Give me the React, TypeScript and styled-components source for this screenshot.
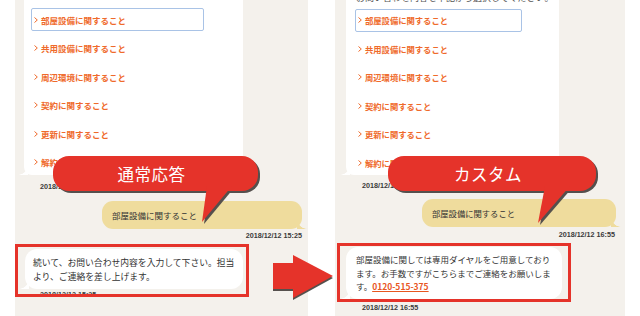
import React from "react";
import styled, { createGlobalStyle } from "styled-components";

const Global = createGlobalStyle`
  html, body { margin: 0; padding: 0; background: #fff; }
  body { width: 640px; height: 316px; overflow: hidden; font-family: "Noto Sans CJK JP", "Noto Sans", sans-serif; }
`;

const BEIGE = "#f4f1ec";
const ORANGE = "#ef6a2b";
const RED = "#e5332a";
const JP = `"Noto Sans CJK JP", "Noto Sans", sans-serif`;

const Page = styled.div`
  position: relative;
  display: flex;
  gap: 27px;
  height: 316px;
  padding-left: 15px;
  overflow: hidden;
`;

const Panel = styled.div<{ $w: number }>`
  width: ${(p) => p.$w}px;
  height: 316px;
  background: ${BEIGE};
  display: flex;
  flex-direction: column;
  overflow: hidden;
  flex-shrink: 0;
`;

const Card = styled.div<{ $ml: number; $w: number; $pt: number }>`
  position: relative;
  margin-left: ${(p) => p.$ml}px;
  width: ${(p) => p.$w}px;
  height: 175px;
  box-sizing: border-box;
  background: #fff;
  padding: ${(p) => p.$pt}px 9px 0 ${(p) => p.$ml - 2}px;
  display: flex;
  flex-direction: column;
  gap: 5.5px;
  border-radius: 0 0 8px 8px;
  &::after {
    content: "";
    position: absolute;
    left: -6px;
    bottom: 0;
    width: 10px;
    height: 10px;
    background: radial-gradient(circle at 0 0, transparent 9.5px, #fff 10px);
  }
`;

const TopLine = styled.div`
  margin-top: -7.5px;
  height: 10.5px;
  font-family: ${JP};
  font-size: 9px;
  line-height: 10px;
  color: #555;
  white-space: nowrap;
  overflow: hidden;
  padding-left: 1px;
`;

const Row = styled.div<{ $w: number; $focus?: boolean; $fs: number }>`
  flex-shrink: 0;
  width: ${(p) => p.$w}px;
  height: 23px;
  box-sizing: border-box;
  display: flex;
  align-items: center;
  gap: 3px;
  padding-left: 2px;
  border: 1px solid ${(p) => (p.$focus ? "#a9c3e6" : "transparent")};
  border-radius: 2px;
  font-family: ${JP};
  font-size: ${(p) => p.$fs}px;
  font-weight: 700;
  color: ${ORANGE};
  white-space: nowrap;
`;

const Chevron = styled.svg`
  width: 4px;
  height: 6px;
  flex-shrink: 0;
`;

const Stamp = styled.div<{ $mt: number; $ml?: number; $mr?: number; $right?: boolean }>`
  margin-top: ${(p) => p.$mt}px;
  margin-left: ${(p) => p.$ml ?? 0}px;
  margin-right: ${(p) => p.$mr ?? 0}px;
  align-self: ${(p) => (p.$right ? "flex-end" : "flex-start")};
  height: 8px;
  font-family: "Liberation Sans", Arial, sans-serif;
  font-size: 7.2px;
  line-height: 8px;
  font-weight: 700;
  color: #3a3a3a;
  white-space: nowrap;
`;

const UserBubble = styled.div<{ $mt: number; $mr: number; $w: number; $fs: number }>`
  position: relative;
  align-self: flex-end;
  margin-top: ${(p) => p.$mt}px;
  margin-right: ${(p) => p.$mr}px;
  width: ${(p) => p.$w}px;
  height: 28px;
  box-sizing: border-box;
  padding-left: 10px;
  display: flex;
  align-items: center;
  background: #efdc9d;
  border-radius: 11px;
  font-family: ${JP};
  font-size: ${(p) => p.$fs}px;
  color: #333;
  &::after {
    content: "";
    position: absolute;
    right: -5px;
    bottom: 0;
    width: 10px;
    height: 10px;
    background: radial-gradient(circle at 100% 0, transparent 9.5px, #efdc9d 10px);
  }
`;

const BotBlock = styled.div<{ $mt: number; $pl: number; $pt: number }>`
  position: relative;
  margin-top: ${(p) => p.$mt}px;
  padding-left: ${(p) => p.$pl}px;
  padding-top: ${(p) => p.$pt}px;
  display: flex;
  flex-direction: column;
`;

const BotBubble = styled.div<{ $w: number; $fs: number; $lh: number; $pt: number; $pl: number }>`
  position: relative;
  width: ${(p) => p.$w}px;
  box-sizing: border-box;
  padding: ${(p) => p.$pt}px 4px 5px ${(p) => p.$pl}px;
  background: #fff;
  border-radius: 12px;
  font-family: ${JP};
  font-size: ${(p) => p.$fs}px;
  line-height: ${(p) => p.$lh}px;
  color: #333;
  white-space: nowrap;
  &::after {
    content: "";
    position: absolute;
    left: -6px;
    bottom: 0;
    width: 10px;
    height: 10px;
    background: radial-gradient(circle at 0 0, transparent 9.5px, #fff 10px);
  }
`;

const Phone = styled.span`
  color: #e8561f;
  font-weight: 700;
  text-decoration: underline;
`;

const Frame = styled.div<{ $l: number; $w: number; $h: number }>`
  position: absolute;
  top: 0;
  left: ${(p) => p.$l}px;
  width: ${(p) => p.$w}px;
  height: ${(p) => p.$h}px;
  box-sizing: border-box;
  border: 3px solid ${RED};
  z-index: 2;
  pointer-events: none;
`;

const CalloutWrap = styled.div<{ $x: number; $y: number; $w: number }>`
  position: absolute;
  left: ${(p) => p.$x}px;
  top: ${(p) => p.$y}px;
  width: ${(p) => p.$w + 4}px;
  height: 72px;
  z-index: 5;
`;

const CalloutSvg = styled.svg`
  position: absolute;
  inset: 0;
  overflow: visible;
`;

const CalloutLabel = styled.div<{ $w: number }>`
  position: relative;
  width: ${(p) => p.$w}px;
  height: 35px;
  display: flex;
  align-items: center;
  justify-content: center;
  padding-right: 8px;
  box-sizing: border-box;
  font-family: ${JP};
  font-size: 16.5px;
  color: #fff;
  letter-spacing: 0.5px;
`;

const ArrowSvg = styled.svg`
  position: absolute;
  left: 272px;
  top: 254px;
  z-index: 5;
`;

function Callout({ x, y, w, tail, label }: { x: number; y: number; w: number; tail: [number, number, number, number]; label: string }) {
  const [b1, b2, tx, ty] = tail;
  const shape = (
    <>
      <rect x={0} y={0} width={w} height={35} rx={16} ry={16} />
      <polygon points={`${b1},30 ${b2},30 ${tx},${ty}`} />
    </>
  );
  return (
    <CalloutWrap $x={x} $y={y} $w={w}>
      <CalloutSvg width={w + 4} height={72}>
        <g fill="#55504d" transform="translate(2,2)">{shape}</g>
        <g fill={RED}>{shape}</g>
      </CalloutSvg>
      <CalloutLabel $w={w}>{label}</CalloutLabel>
    </CalloutWrap>
  );
}

const items = ["部屋設備に関すること", "共用設備に関すること", "周辺環境に関すること", "契約に関すること", "更新に関すること", "解約に関すること"];

function Menu({ w, fs }: { w: number; fs: number }) {
  return (
    <>
      {items.map((t, i) => (
        <Row key={t} $w={w} $fs={fs} $focus={i === 0}>
          <Chevron viewBox="0 0 4 6">
            <polyline points="0.5,0.5 3.3,3 0.5,5.5" fill="none" stroke={ORANGE} strokeWidth="1" />
          </Chevron>
          {t}
        </Row>
      ))}
    </>
  );
}

export default function App() {
  return (
    <>
      <Global />
      <Page>
        <Panel $w={293}>
          <Card $ml={9} $w={219} $pt={8}>
            <Menu w={173} fs={8.5} />
          </Card>
          <Stamp $mt={8} $ml={25}>2018/12/12 15:25</Stamp>
          <UserBubble $mt={10} $mr={6} $w={200} $fs={8.5}>部屋設備に関すること</UserBubble>
          <Stamp $mt={3} $mr={6} $right>2018/12/12 15:25</Stamp>
          <BotBlock $mt={4} $pl={10} $pt={5}>
            <Frame $l={0} $w={234} $h={53} />
            <BotBubble $w={218} $fs={8.8} $lh={14} $pt={7} $pl={8}>
              続いて、お問い合わせ内容を入力して下さい。担当
              <br />
              より、ご連絡を差し上げます。
            </BotBubble>
            <Stamp $mt={2} $ml={15}>2018/12/12 15:25</Stamp>
          </BotBlock>
        </Panel>
        <Panel $w={290}>
          <Card $ml={11} $w={213} $pt={0}>
            <TopLine>お問い合わせ内容を下記から選択してください。</TopLine>
            <Menu w={167} fs={8.3} />
          </Card>
          <Stamp $mt={7} $ml={27}>2018/12/12 16:55</Stamp>
          <UserBubble $mt={9} $mr={9} $w={194} $fs={8.3}>部屋設備に関すること</UserBubble>
          <Stamp $mt={4} $mr={10} $right>2018/12/12 16:55</Stamp>
          <BotBlock $mt={4} $pl={11} $pt={4}>
            <Frame $l={2} $w={234} $h={59} />
            <BotBubble $w={216} $fs={8.5} $lh={13.5} $pt={6} $pl={10}>
              部屋設備に関しては専用ダイヤルをご用意しており
              <br />
              ます。お手数ですがこちらまでご連絡をお願いしま
              <br />
              す。<Phone>0120-515-375</Phone>
            </BotBubble>
            <Stamp $mt={5.5} $ml={16}>2018/12/12 16:55</Stamp>
          </BotBlock>
        </Panel>
        <Callout x={53} y={156} w={205} tail={[154, 179, 149, 66]} label="通常応答" />
        <Callout x={388} y={156} w={208} tail={[157, 182, 150, 67]} label="カスタム" />
        <ArrowSvg width={64} height={48} viewBox="0 0 64 48">
          <g fill="#55504d" transform="translate(0,2)">
            <rect x={1} y={9} width={21} height={26} />
            <polygon points="21,1 61,22 21,44" />
          </g>
          <g fill={RED}>
            <rect x={1} y={9} width={21} height={26} />
            <polygon points="21,1 61,22 21,44" />
          </g>
        </ArrowSvg>
      </Page>
    </>
  );
}
